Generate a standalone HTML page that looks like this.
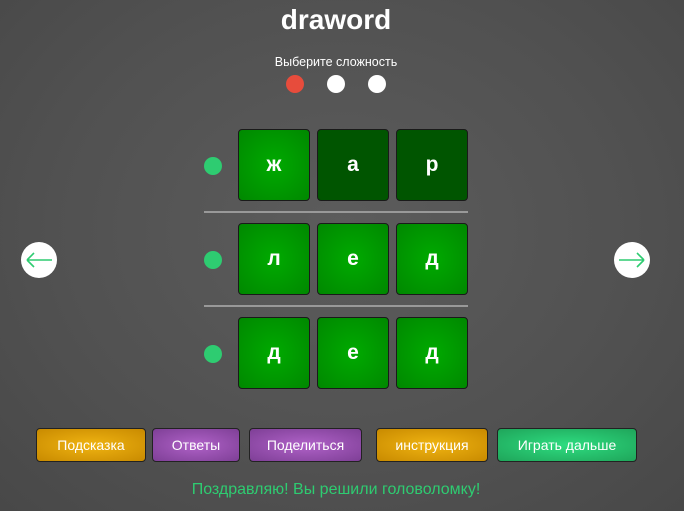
<!DOCTYPE html>
<html><head><meta charset="utf-8"><style>
html,body{margin:0;padding:0}
body{width:684px;height:511px;overflow:hidden;position:relative;font-family:"Liberation Sans",sans-serif;background:radial-gradient(ellipse at 50% 45%,#5c5c5c 0%,#515151 60%,#484848 100%);}
.a{position:absolute}
.t{position:absolute;width:72px;height:72px;border:1px solid #1a1a1a;border-radius:4px;box-sizing:border-box;color:#fff;font-weight:bold;font-size:21px;display:flex;align-items:center;justify-content:center;background:radial-gradient(circle,#00aa00 0%,#008800 100%)}
.d{background:#005500}
.g{position:absolute;width:18px;height:18px;border-radius:50%;background:#2ecc71;left:204px}
.l{position:absolute;left:204px;width:264px;height:2px;background:#999}
.b{position:absolute;top:428px;height:34px;border:1px solid #222;border-radius:4px;box-sizing:border-box;color:#fff;font-size:14px;display:flex;align-items:center;justify-content:center}
.y{background:radial-gradient(ellipse,#f0b412 0%,#c88a00 100%)}
.p{background:radial-gradient(ellipse,#b062c8 0%,#7e3f96 100%)}
.c{position:absolute;width:36px;height:36px;border-radius:50%;background:#fff;top:242px}
.c svg{position:absolute;left:0;top:0}
</style></head><body>
<div class="a" style="left:0;width:672px;top:4px;text-align:center;color:#fff;font-weight:bold;font-size:28px">draword</div>
<div class="a" style="left:0;width:672px;top:55px;text-align:center;color:#fff;font-size:12.5px">Выберите сложность</div>
<div class="a" style="left:286px;top:75px;width:18px;height:18px;border-radius:50%;background:#e74c3c"></div>
<div class="a" style="left:327px;top:75px;width:18px;height:18px;border-radius:50%;background:#fff"></div>
<div class="a" style="left:368px;top:75px;width:18px;height:18px;border-radius:50%;background:#fff"></div>

<div class="g" style="top:157px"></div>
<div class="t" style="left:238px;top:129px">ж</div>
<div class="t d" style="left:317px;top:129px">а</div>
<div class="t d" style="left:396px;top:129px">р</div>
<div class="l" style="top:211px"></div>
<div class="g" style="top:251px"></div>
<div class="t" style="left:238px;top:223px">л</div>
<div class="t" style="left:317px;top:223px">е</div>
<div class="t" style="left:396px;top:223px">д</div>
<div class="l" style="top:305px"></div>
<div class="g" style="top:345px"></div>
<div class="t" style="left:238px;top:317px">д</div>
<div class="t" style="left:317px;top:317px">е</div>
<div class="t" style="left:396px;top:317px">д</div>

<div class="c" style="left:21px"><svg width="36" height="36"><path d="M6 18H31M6 18L13 11M6 18L13 25" stroke="#2ecc71" stroke-width="1.6" fill="none"/></svg></div>
<div class="c" style="left:614px"><svg width="36" height="36"><path d="M5 18H30M30 18L23 11M30 18L23 25" stroke="#2ecc71" stroke-width="1.6" fill="none"/></svg></div>

<div class="b y" style="left:36px;width:110px">Подсказка</div>
<div class="b p" style="left:152px;width:88px">Ответы</div>
<div class="b p" style="left:249px;width:113px">Поделиться</div>
<div class="b y" style="left:376px;width:112px">инструкция</div>
<div class="b" style="left:497px;width:140px;background:radial-gradient(ellipse,#2edc80 0%,#1fa55a 100%)">Играть дальше</div>
<div class="a" style="left:0;width:672px;top:481px;text-align:center;color:#2ecc71;font-size:16px">Поздравляю! Вы решили головоломку!</div>
</body></html>
